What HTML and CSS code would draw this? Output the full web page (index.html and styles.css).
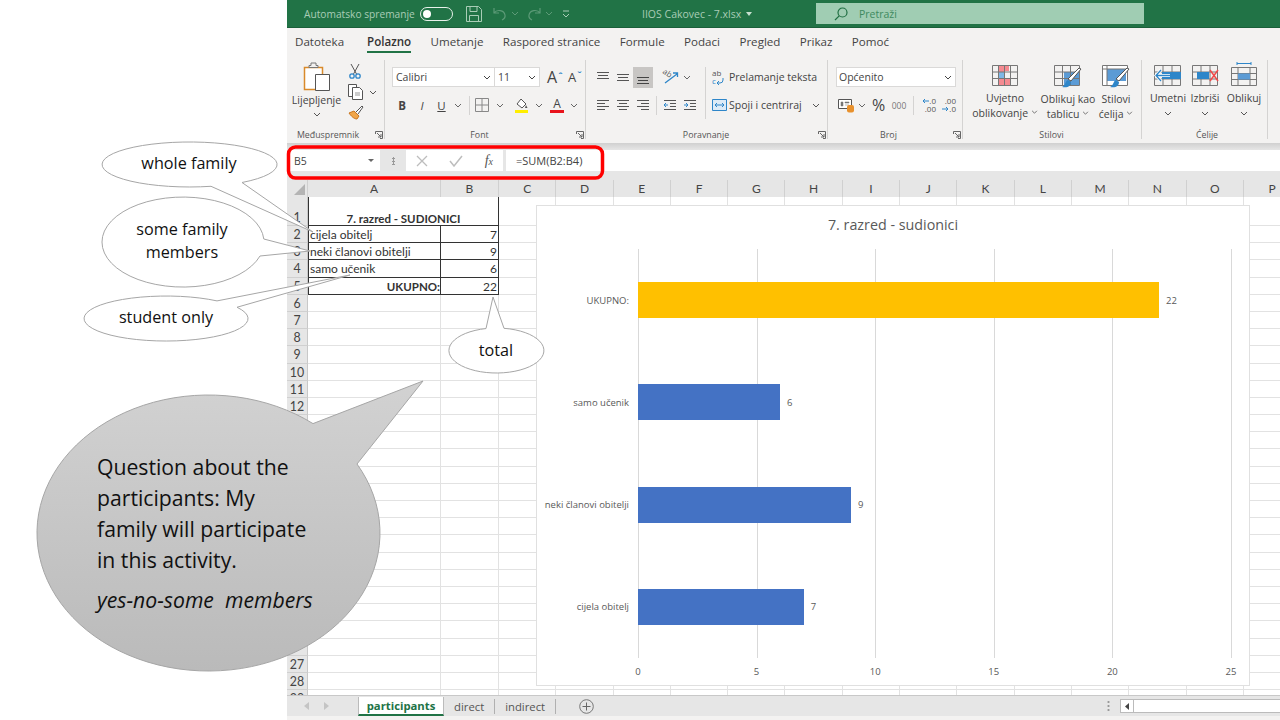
FILE: index.html
```html
<!DOCTYPE html>
<html lang="hr">
<head>
<meta charset="utf-8">
<title>IIOS Cakovec - 7.xlsx</title>
<link rel="stylesheet" href="styles.css">
</head>
<body>
<div class="slide">
  <main class="excel">
    <header class="titlebar">
      <span class="autosave">Automatsko spremanje</span>
      <span class="toggle"><i></i></span>
      <svg class="save" width="16" height="16" viewBox="0 0 16 16"><path d="M.5.5h12l3 3v12H.5zM4 .5v5h7v-5M3.500 15.500v-6h9v6" fill="none" stroke="#a9cdb6"/></svg>
      <svg class="undo" width="14" height="14" viewBox="0 0 14 14"><path d="M1 1v5h5M1 6c3-4 10-3 11 2 .4 2-1 4-3 5" fill="none" stroke="#5c9a77" stroke-width="1.200"/></svg>
      <svg class="tchev" width="8" height="5" viewBox="0 0 8 5"><path d="M1 1l3 3 3-3" fill="none" stroke="#5c9a77"/></svg>
      <svg class="redo" width="14" height="14" viewBox="0 0 14 14"><path d="M13 1v5H8M13 6C10 2 3 3 2 8c-.4 2 1 4 3 5" fill="none" stroke="#5c9a77" stroke-width="1.200"/></svg>
      <svg class="tchev" width="8" height="5" viewBox="0 0 8 5"><path d="M1 1l3 3 3-3" fill="none" stroke="#5c9a77"/></svg>
      <svg class="custom" width="8" height="8" viewBox="0 0 8 8"><path d="M1 1h6M1 4l3 3 3-3" fill="none" stroke="#a9cdb6"/></svg>
      <span class="doc">IIOS Cakovec - 7.xlsx</span>
      <span class="caret"></span>
      <div class="search">
        <svg width="14" height="14" viewBox="0 0 14 14"><circle cx="8.500" cy="5.500" r="4.500" fill="none" stroke="#1f6e42" stroke-width="1.200"/><path d="M5.200 8.800L1 13" stroke="#1f6e42" stroke-width="1.200"/></svg>
        <span>Pretraži</span>
      </div>
    </header>

    <nav class="tabs">
      <span class="file">Datoteka</span><span class="active">Polazno</span><span>Umetanje</span><span>Raspored stranice</span><span>Formule</span><span>Podaci</span><span>Pregled</span><span>Prikaz</span><span>Pomoć</span>
    </nav>

    <section class="ribbon">
      <div class="group g-clip">
        <div class="gbody clip">
          <div class="paste">
            <svg width="28" height="30" viewBox="0 0 28 30"><path d="M1.500 5.500h18v22h-18z" fill="#fff" stroke="#d98a2b" stroke-width="1.500"/><path d="M6 5.500h9v-2h-2V1H8v2.500H6z" fill="#f3f2f1" stroke="#777"/><path d="M12.500 12.500h14v16h-14z" fill="#fff" stroke="#555"/></svg>
            <span>Lijepljenje</span>
            <svg class="chev" width="8" height="5" viewBox="0 0 8 5"><path d="M1 1l3 3 3-3" fill="none" stroke="#555"/></svg>
          </div>
          <div class="clip-tools">
            <svg width="14" height="16" viewBox="0 0 14 16"><path d="M3 1l5.500 10M11 1L5.500 11" stroke="#555" fill="none"/><circle cx="4" cy="13" r="2.200" fill="none" stroke="#2e86c9" stroke-width="1.300"/><circle cx="10" cy="13" r="2.200" fill="none" stroke="#2e86c9" stroke-width="1.300"/></svg>
            <span class="clip-copy"><svg width="16" height="16" viewBox="0 0 16 16"><path d="M.5.500h8v12h-8z" fill="#fff" stroke="#555"/><path d="M4.500 3.500h7l3 3v9h-10z" fill="#fff" stroke="#555"/><path d="M7 9h5M7 11h5" stroke="#999"/></svg><svg class="chev" width="8" height="5" viewBox="0 0 8 5"><path d="M1 1l3 3 3-3" fill="none" stroke="#555"/></svg></span>
            <svg width="16" height="15" viewBox="0 0 16 15"><path d="M1 8l5-2 5 5-2 3c-3 0-6-3-8-6z" fill="#f0a64a" stroke="#c9761f"/><path d="M8 7l6-6 1 1-5 7" fill="#fff" stroke="#555"/></svg>
          </div>
        </div>
        <footer class="gfoot"><i></i><span>Međuspremnik</span><svg class="launch" width="8" height="8" viewBox="0 0 8 8"><path d="M.5 3V.5H7.500V7.500H5M2 2l4 4M3 6h3V3" fill="none" stroke="#666"/></svg></footer>
      </div>

      <div class="group g-font">
        <div class="gbody stack">
          <div class="rrow">
            <span class="select w102">Calibri<svg class="chev" width="8" height="5" viewBox="0 0 8 5"><path d="M1 1l3 3 3-3" fill="none" stroke="#444"/></svg></span>
            <span class="select w44">11<svg class="chev" width="8" height="5" viewBox="0 0 8 5"><path d="M1 1l3 3 3-3" fill="none" stroke="#444"/></svg></span>
            <span class="bigA">A<sup>ˆ</sup></span><span class="smallA">A<sup>ˇ</sup></span>
          </div>
          <div class="rrow row2">
            <b class="ib w20 t-b">B</b><i class="ib w20 t-i">I</i><u class="ib w19 t-u">U</u>
            <span class="ib w14"><svg width="8" height="5" viewBox="0 0 8 5"><path d="M1 1l3 3 3-3" fill="none" stroke="#666"/></svg></span>
            <span class="vsep"></span>
            <span class="ib w16"><svg width="14" height="14" viewBox="0 0 14 14"><path d="M.5.500h13v13H.5zM7 .5v13M.5 7h13" fill="none" stroke="#888"/></svg></span>
            <span class="ib w19"><svg width="8" height="5" viewBox="0 0 8 5"><path d="M1 1l3 3 3-3" fill="none" stroke="#666"/></svg></span>
            <span class="ib w24"><svg width="15" height="15" viewBox="0 0 15 15"><path d="M7 1l5 5-4 4-5-4z" fill="#fff" stroke="#555"/><path d="M12 7l1.500 3H11z" fill="#555"/><path d="M1 12h13v3H1z" fill="#ffee00"/></svg></span>
            <span class="ib w12"><svg width="8" height="5" viewBox="0 0 8 5"><path d="M1 1l3 3 3-3" fill="none" stroke="#666"/></svg></span>
            <span class="ib w24 colorA">A</span>
            <span class="ib w10"><svg width="8" height="5" viewBox="0 0 8 5"><path d="M1 1l3 3 3-3" fill="none" stroke="#666"/></svg></span>
          </div>
        </div>
        <footer class="gfoot"><i></i><span>Font</span><svg class="launch" width="8" height="8" viewBox="0 0 8 8"><path d="M.5 3V.5H7.500V7.500H5M2 2l4 4M3 6h3V3" fill="none" stroke="#666"/></svg></footer>
      </div>

      <div class="group g-align">
        <div class="gbody align">
          <div class="stack col-a">
            <div class="rrow">
              <span class="ib w20"><svg width="14" height="14" viewBox="0 0 14 14"><path d="M1 2.500h12M2 5.500h10M1 8.500h12" stroke="#555"/></svg></span>
              <span class="ib w20"><svg width="14" height="14" viewBox="0 0 14 14"><path d="M1 4.500h12M2 7.500h10M1 10.500h12" stroke="#555"/></svg></span>
              <span class="ib w20 pressed"><svg width="14" height="14" viewBox="0 0 14 14"><path d="M1 7.500h12M2 10.500h10M1 13.500h12" stroke="#444"/></svg></span>
              <span class="ib w8"></span>
              <span class="ib w20 orient"><em>ab</em><svg width="16" height="15" viewBox="0 0 16 15"><path d="M2 13L14 4M10 3h4.500v4" fill="none" stroke="#2e86c9" stroke-width="1.300"/></svg></span>
              <span class="ib w12"><svg width="8" height="5" viewBox="0 0 8 5"><path d="M1 1l3 3 3-3" fill="none" stroke="#666"/></svg></span>
            </div>
            <div class="rrow row2">
              <span class="ib w20"><svg width="14" height="14" viewBox="0 0 14 14"><path d="M1 2.500h12M1 5.500h8M1 8.500h12M1 11.500h8" stroke="#555"/></svg></span>
              <span class="ib w20"><svg width="14" height="14" viewBox="0 0 14 14"><path d="M1 2.500h12M3 5.500h8M1 8.500h12M3 11.500h8" stroke="#555"/></svg></span>
              <span class="ib w20"><svg width="14" height="14" viewBox="0 0 14 14"><path d="M1 2.500h12M5 5.500h8M1 8.500h12M5 11.500h8" stroke="#555"/></svg></span>
              <span class="vsep tight"></span>
              <span class="ib w20"><svg width="14" height="14" viewBox="0 0 14 14"><path d="M1 2.500h12M7 5.500h6M7 8.500h6M1 11.500h12" stroke="#555"/><path d="M5 7H1M3 5L1 7l2 2" fill="none" stroke="#2e86c9"/></svg></span>
              <span class="ib w20"><svg width="14" height="14" viewBox="0 0 14 14"><path d="M1 2.500h12M7 5.500h6M7 8.500h6M1 11.500h12" stroke="#555"/><path d="M1 7h4M3 5l2 2-2 2" fill="none" stroke="#2e86c9"/></svg></span>
            </div>
          </div>
          <span class="vsep tall"></span>
          <div class="stack col-b">
            <div class="rrow textbtn">
              <span class="wrapi"><span class="tiny">ab</span><span class="tiny blue">c<svg width="8" height="7" viewBox="0 0 8 7"><path d="M7 0v2a3 3 0 0 1-3 3H1M3 3L1 5l2 2" fill="none" stroke="#2e86c9"/></svg></span></span>
              <span>Prelamanje teksta</span>
            </div>
            <div class="rrow row2 textbtn"><svg width="15" height="14" viewBox="0 0 15 14"><path d="M.5 1.500h14v11H.5z" fill="#dcebf7" stroke="#2e86c9"/><path d="M3 7h9M5 5L3 7l2 2M10 5l2 2-2 2" fill="none" stroke="#2e86c9"/></svg><span>Spoji i centriraj</span><svg class="chev-l" width="8" height="5" viewBox="0 0 8 5"><path d="M1 1l3 3 3-3" fill="none" stroke="#555"/></svg></div>
          </div>
        </div>
        <footer class="gfoot"><i></i><span>Poravnanje</span><svg class="launch" width="8" height="8" viewBox="0 0 8 8"><path d="M.5 3V.5H7.500V7.500H5M2 2l4 4M3 6h3V3" fill="none" stroke="#666"/></svg></footer>
      </div>

      <div class="group g-num">
        <div class="gbody stack">
          <div class="rrow"><span class="select w120">Općenito<svg class="chev" width="8" height="5" viewBox="0 0 8 5"><path d="M1 1l3 3 3-3" fill="none" stroke="#444"/></svg></span></div>
          <div class="rrow row2">
            <span class="ib w20"><svg width="17" height="15" viewBox="0 0 17 15"><path d="M.5 1.500h13v9H.5z" fill="#fff" stroke="#555"/><path d="M3 4h2v4H3zM7 4h4v1H7zM7 7h4" fill="#777" stroke="#777" stroke-width=".5"/><rect x="9" y="7" width="7" height="7.500" rx="2" fill="#e8912d"/></svg></span>
            <span class="ib w12"><svg width="8" height="5" viewBox="0 0 8 5"><path d="M1 1l3 3 3-3" fill="none" stroke="#666"/></svg></span>
            <span class="ib w21 pct">%</span>
            <span class="ib w20 thou">000</span>
            <span class="vsep"></span>
            <span class="ib w20 dec">
              <span class="tiny"><svg width="7" height="6" viewBox="0 0 7 6"><path d="M7 3H1M3 1L1 3l2 2" fill="none" stroke="#2e86c9"/></svg>.0</span>
              <span class="tiny">.00</span>
            </span>
            <span class="ib w20 dec">
              <span class="tiny">.00</span>
              <span class="tiny"><svg width="7" height="6" viewBox="0 0 7 6"><path d="M0 3h6M4 1l2 2-2 2" fill="none" stroke="#2e86c9"/></svg>.0</span>
            </span>
          </div>
        </div>
        <footer class="gfoot"><i></i><span>Broj</span><svg class="launch" width="8" height="8" viewBox="0 0 8 8"><path d="M.5 3V.5H7.500V7.500H5M2 2l4 4M3 6h3V3" fill="none" stroke="#666"/></svg></footer>
      </div>

      <div class="group g-styles">
        <div class="gbody bigs">
          <div class="big w74">
            <svg width="26" height="24" viewBox="0 0 26 24"><path d="M6 1h11v6H12v7h6v8H6z" fill="#f58a91"/><path d="M6 8h6v6H6z" fill="#7fb8e6"/><path d="M.5 1.500h25v20H.5zM.5 8h25M.5 14.500h25M6.500 1.500v20M12.500 1.500v20M18.500 1.500v20" fill="none" stroke="#777"/></svg>
            <span>Uvjetno</span><span>oblikovanje <svg width="7" height="4" viewBox="0 0 8 5"><path d="M1 1l3 3 3-3" fill="none" stroke="#555"/></svg></span>
          </div>
          <div class="big w52">
            <svg width="28" height="25" viewBox="0 0 28 25"><path d="M10 8h15v13H10z" fill="#5b9bd5"/><path d="M.5 1.500h25v20H.5zM.5 8h25M.5 14.500h25M8.500 1.500v20M16.500 1.500v20" fill="none" stroke="#777"/><path d="M27 5L17 17l-3-2L25 4z" fill="#fff" stroke="#555"/><path d="M14 16c-3 1-2 5-6 7 6 1 9-1 9-5z" fill="#2e86c9"/></svg>
            <span>Oblikuj kao</span><span>tablicu <svg width="7" height="4" viewBox="0 0 8 5"><path d="M1 1l3 3 3-3" fill="none" stroke="#555"/></svg></span>
          </div>
          <div class="big w44">
            <svg width="28" height="25" viewBox="0 0 28 25"><path d="M.5 1.500h25v20H.5z" fill="#fff" stroke="#777"/><path d="M5 5h19v12H5z" fill="#5b9bd5"/><path d="M.5 5h25M5 1.500v20" fill="none" stroke="#777"/><path d="M27 5L17 17l-3-2L25 4z" fill="#fff" stroke="#555"/><path d="M14 16c-3 1-2 5-6 7 6 1 9-1 9-5z" fill="#2e86c9"/></svg>
            <span>Stilovi</span><span>ćelija <svg width="7" height="4" viewBox="0 0 8 5"><path d="M1 1l3 3 3-3" fill="none" stroke="#555"/></svg></span>
          </div>
        </div>
        <footer class="gfoot"><i></i><span>Stilovi</span><i></i></footer>
      </div>

      <div class="group g-cells">
        <div class="gbody bigs">
          <div class="big w44">
            <svg width="28" height="24" viewBox="0 0 28 24"><path d="M.5 1.500h26v20H.5zM.5 8h26M.5 15h26M9 1.500v20M18 1.500v20" fill="none" stroke="#777"/><path d="M8 8h19v7H8z" fill="#2e86c9"/><path d="M16 11.500H2M7 6l-5 5.500L7 17" fill="none" stroke="#fff" stroke-width="3"/><path d="M16 11.500H2M7 6l-5 5.500L7 17" fill="none" stroke="#2e86c9" stroke-width="1.300"/></svg>
            <span>Umetni</span>
            <svg class="chev" width="8" height="5" viewBox="0 0 8 5"><path d="M1 1l3 3 3-3" fill="none" stroke="#555"/></svg>
          </div>
          <div class="big w30">
            <svg width="27" height="24" viewBox="0 0 27 24"><path d="M.5 1.500h25v20H.5zM.5 8h25M.5 15h25M9 1.500v20M18 1.500v20" fill="none" stroke="#777"/><path d="M5 8h12v7H5z" fill="#2e86c9"/><path d="M18 6l8 11M26 6l-8 11" stroke="#f04b4b" stroke-width="1.500"/></svg>
            <span>Izbriši</span>
            <svg class="chev" width="8" height="5" viewBox="0 0 8 5"><path d="M1 1l3 3 3-3" fill="none" stroke="#555"/></svg>
          </div>
          <div class="big w48">
            <svg class="fmt" width="26" height="26" viewBox="0 0 26 26"><path d="M6 1.500h14M6 0v3M20 0v3" stroke="#2e86c9"/><path d="M.5 5.500h25v18H.5zM.5 11.500h25M.5 17.500h25M7 5.500v18M19 5.500v18" fill="none" stroke="#777"/><path d="M7 11.500h12v6H7z" fill="#5b9bd5"/></svg>
            <span>Oblikuj</span>
            <svg class="chev" width="8" height="5" viewBox="0 0 8 5"><path d="M1 1l3 3 3-3" fill="none" stroke="#555"/></svg>
          </div>
        </div>
        <footer class="gfoot"><i></i><span>Ćelije</span><i></i></footer>
      </div>
    </section>
    <div class="ribbon-shadow"></div>

    <section class="formula">
      <div class="namebox"><span>B5</span><em></em></div>
      <div class="fdots"></div>
      <div class="fxbox">
        <svg width="12" height="12" viewBox="0 0 12 12"><path d="M1 1l10 10M11 1L1 11" stroke="#bdbdbd" stroke-width="1.300"/></svg>
        <svg width="14" height="12" viewBox="0 0 14 12"><path d="M1 6l4 5 8-10" fill="none" stroke="#bdbdbd" stroke-width="1.500"/></svg>
        <span class="fx">f<small>x</small></span>
      </div>
      <div class="finput">=SUM(B2:B4)</div>
    </section>

    <section class="sheet">
      <div class="colheads">
        <span class="corner"><svg width="11" height="11" viewBox="0 0 11 11"><path d="M11 0v11H0z" fill="#b4b4b4"/></svg></span>
        <span class="c-a">A</span><span class="c-b">B</span>
        <span class="c">C</span><span class="c">D</span><span class="c">E</span><span class="c">F</span><span class="c">G</span><span class="c">H</span><span class="c">I</span><span class="c">J</span><span class="c">K</span><span class="c">L</span><span class="c">M</span><span class="c">N</span><span class="c">O</span><span class="c">P</span>
      </div>
      <div class="rows">
        <div class="row first"><span class="num">1</span><span class="merged">7. razred - SUDIONICI</span><span class="fill"></span></div>
        <div class="row"><span class="num">2</span><span class="a data">cijela obitelj</span><span class="b data">7</span><span class="fill"></span></div>
        <div class="row"><span class="num">3</span><span class="a data">neki članovi obitelji</span><span class="b data">9</span><span class="fill"></span></div>
        <div class="row"><span class="num">4</span><span class="a data">samo učenik</span><span class="b data">6</span><span class="fill"></span></div>
        <div class="row"><span class="num">5</span><span class="a data total">UKUPNO:</span><span class="b data">22</span><span class="fill"></span></div>
        <div class="row"><span class="num">6</span><span class="a"></span><span class="b"></span><span class="fill"></span></div>
        <div class="row"><span class="num">7</span><span class="a"></span><span class="b"></span><span class="fill"></span></div>
        <div class="row"><span class="num">8</span><span class="a"></span><span class="b"></span><span class="fill"></span></div>
        <div class="row"><span class="num">9</span><span class="a"></span><span class="b"></span><span class="fill"></span></div>
        <div class="row"><span class="num">10</span><span class="a"></span><span class="b"></span><span class="fill"></span></div>
        <div class="row"><span class="num">11</span><span class="a"></span><span class="b"></span><span class="fill"></span></div>
        <div class="row"><span class="num">12</span><span class="a"></span><span class="b"></span><span class="fill"></span></div>
        <div class="row"><span class="num"></span><span class="a"></span><span class="b"></span><span class="fill"></span></div>
        <div class="row"><span class="num"></span><span class="a"></span><span class="b"></span><span class="fill"></span></div>
        <div class="row"><span class="num"></span><span class="a"></span><span class="b"></span><span class="fill"></span></div>
        <div class="row"><span class="num"></span><span class="a"></span><span class="b"></span><span class="fill"></span></div>
        <div class="row"><span class="num"></span><span class="a"></span><span class="b"></span><span class="fill"></span></div>
        <div class="row"><span class="num"></span><span class="a"></span><span class="b"></span><span class="fill"></span></div>
        <div class="row"><span class="num"></span><span class="a"></span><span class="b"></span><span class="fill"></span></div>
        <div class="row"><span class="num"></span><span class="a"></span><span class="b"></span><span class="fill"></span></div>
        <div class="row"><span class="num"></span><span class="a"></span><span class="b"></span><span class="fill"></span></div>
        <div class="row"><span class="num"></span><span class="a"></span><span class="b"></span><span class="fill"></span></div>
        <div class="row"><span class="num"></span><span class="a"></span><span class="b"></span><span class="fill"></span></div>
        <div class="row"><span class="num"></span><span class="a"></span><span class="b"></span><span class="fill"></span></div>
        <div class="row"><span class="num"></span><span class="a"></span><span class="b"></span><span class="fill"></span></div>
        <div class="row"><span class="num"></span><span class="a"></span><span class="b"></span><span class="fill"></span></div>
        <div class="row"><span class="num">27</span><span class="a"></span><span class="b"></span><span class="fill"></span></div>
        <div class="row"><span class="num">28</span><span class="a"></span><span class="b"></span><span class="fill"></span></div>
        <div class="row"><span class="num">29</span><span class="a"></span><span class="b"></span><span class="fill"></span></div>
      </div>

      <figure class="chart">
        <figcaption>7. razred - sudionici</figcaption>
        <div class="plot">
          <div class="bar-row"><span class="cat">UKUPNO:</span><div class="track"><i class="bar gold" style="width:88%"></i><span class="val">22</span></div></div>
          <div class="bar-row"><span class="cat">samo učenik</span><div class="track"><i class="bar" style="width:24%"></i><span class="val">6</span></div></div>
          <div class="bar-row"><span class="cat">neki članovi obitelji</span><div class="track"><i class="bar" style="width:36%"></i><span class="val">9</span></div></div>
          <div class="bar-row"><span class="cat">cijela obitelj</span><div class="track"><i class="bar" style="width:28%"></i><span class="val">7</span></div></div>
        </div>
        <div class="axis"><span>0</span><span>5</span><span>10</span><span>15</span><span>20</span><span>25</span></div>
      </figure>
    </section>

    <section class="sheetbar">
      <div class="navs">
        <svg width="5" height="8" viewBox="0 0 5 8"><path d="M5 0v8L0 4z" fill="#c4c4c4"/></svg>
        <svg width="5" height="8" viewBox="0 0 5 8"><path d="M0 0v8l5-4z" fill="#c4c4c4"/></svg>
      </div>
      <span class="stab current">participants</span>
      <span class="stab">direct</span><span class="ssep"></span>
      <span class="stab third">indirect</span><span class="ssep"></span>
      <svg class="plus" width="15" height="15" viewBox="0 0 15 15"><circle cx="7.500" cy="7.500" r="6.800" fill="none" stroke="#777"/><path d="M7.500 3.500v8M3.500 7.500h8" stroke="#666"/></svg>
      <span class="grip"></span>
      <div class="hscroll"><span class="harrow"><svg width="4" height="7" viewBox="0 0 4 7"><path d="M4 0v7L0 3.500z" fill="#444"/></svg></span></div>
    </section>
    <div class="statusbar"></div>
  </main>

  <svg class="overlay" width="1280" height="720" viewBox="0 0 1280 720">
    <defs>
      <linearGradient id="grey" x1="0" y1="0" x2="0" y2="1">
        <stop offset="0" stop-color="#d2d2d2"/>
        <stop offset="1" stop-color="#bababa"/>
      </linearGradient>
    </defs>
    <rect class="redbox" x="288.500" y="147" width="314" height="31" rx="7"/>
    <path class="bubble" d="M242 182.500A87.500 22.500 0 1 0 211 186.300L313 232Z"/>
    <text class="lbl" x="189" y="169">whole family</text>
    <path class="bubble" d="M260 256A81 45 0 1 1 263.800 239L310 251Z"/>
    <text class="lbl" x="182" y="235">some family</text>
    <text class="lbl" x="182" y="258">members</text>
    <path class="bubble" d="M237 307.250A82 22.500 0 1 1 217 300.900L350 275Z"/>
    <text class="lbl" x="166" y="323">student only</text>
    <path class="bubble" d="M504 328.300A47.500 22.500 0 1 1 486 328.560L493 297Z"/>
    <text class="lbl" x="496" y="356">total</text>
    <path class="bubble-big" d="M357 464A171.500 138 0 1 1 313 423.600L423 381Z"/>
    <text class="big-t" x="97" y="475">Question about the</text>
    <text class="big-t" x="97" y="506">participants: My</text>
    <text class="big-t" x="97" y="537">family will participate</text>
    <text class="big-t" x="97" y="568">in this activity.</text>
    <text class="big-t em" x="97" y="608">yes-no-some  members</text>
  </svg>
</div>
</body>
</html>
```

FILE: styles.css
```css
* { box-sizing: border-box; }
html, body { margin: 0; padding: 0; height: 100%; background: #fff; overflow: hidden; }
body { font-family: "Open Sans", "Noto Sans", "Liberation Sans", sans-serif; color: #444; }
.slide { position: relative; width: 1280px; height: 720px; overflow: hidden; background: #fff; }
.excel { margin-left: 287px; width: 993px; height: 720px; display: flex; flex-direction: column; background: #e6e6e6; }

/* title bar */
.titlebar { height: 28px; flex: none; display: flex; align-items: center; padding-left: 17px; background: #217346; border-bottom: 1px solid #1a5f39; }
.autosave { width: 116px; font-size: 10.200px; color: #a9cdb6; white-space: nowrap; }
.toggle { width: 33px; height: 14px; border: 1px solid #e8f1eb; border-radius: 7px; display: flex; align-items: center; padding-left: 2px; }
.toggle i { width: 8px; height: 8px; border-radius: 50%; background: #fff; }
.save { margin-left: 13px; }
.undo { margin-left: 11px; }
.tchev { margin-left: 4px; }
.redo { margin-left: 8px; }
.custom { margin-left: 9px; }
.doc { margin-left: 72px; width: 101px; font-size: 10.500px; color: #a9cdb6; white-space: nowrap; }
.caret { width: 0; height: 0; margin-left: 3px; border: 3px solid transparent; border-top: 4px solid #c8e0d0; border-bottom: 0; }
.search { margin-left: 64px; width: 328px; height: 21px; display: flex; align-items: center; gap: 11px; padding-left: 18px; background: #a0cdb3; font-size: 10.500px; color: #3e8a5f; }

/* tabs */
.tabs { height: 30px; flex: none; display: flex; gap: 19.400px; padding: 5px 0 0 8px; background: #f3f2f1; font-size: 11.600px; color: #444; }
.tabs span { height: 20px; line-height: 18px; white-space: nowrap; }
.tabs .file { margin-right: 3.500px; }
.tabs .active { font-weight: 600; border-bottom: 2px solid #217346; color: #333; }

/* ribbon */
.ribbon { height: 85px; flex: none; display: flex; background: #f3f2f1; font-size: 10.500px; }
.group { flex: none; display: flex; flex-direction: column; height: 79px; margin-top: 2px; border-right: 1px solid #d4d3d2; }
.g-clip { width: 98px; }
.g-font { width: 201px; }
.g-align { width: 242px; }
.g-num { width: 135px; }
.g-styles { width: 179px; }
.g-cells { width: 126px; }
.gbody { flex: 1; min-height: 0; }
.gfoot { height: 14px; display: grid; grid-template-columns: 1fr auto 1fr; align-items: center; font-size: 8.800px; color: #555; padding-right: 1px; margin-bottom: -3px; }
.gfoot span { white-space: nowrap; line-height: 14px; }
.g-clip .gfoot span { margin-right: 14px; }
.g-font .gfoot span { margin-right: 10px; }
.g-num .gfoot span { margin-right: 12px; }
.g-cells .gfoot span { margin-left: 6px; }
.launch { justify-self: end; }

.stack { display: flex; flex-direction: column; padding: 7px 0 0 8px; }
.g-font .stack { padding-left: 7px; }
.rrow { display: flex; align-items: center; height: 20px; }
.row2 { margin-top: 8px; }
.select { height: 20px; background: #fff; border: 1px solid #dad9d8; display: flex; align-items: center; justify-content: space-between; padding: 0 3px; font-size: 10.500px; color: #444; }
.w102 { width: 103px; }
.w44 { width: 46px; margin-left: -1px; }
.w120 { width: 120px; padding-left: 2px; }
.bigA { margin-left: 7px; font-size: 16px; width: 21px; line-height: 20px; }
.smallA { font-size: 13px; width: 14px; line-height: 20px; }
.bigA sup, .smallA sup { font-size: 9px; color: #2e86c9; vertical-align: 4px; line-height: 0; font-weight: 700; margin-left: 1px; }
.ib { flex: none; height: 20px; display: flex; align-items: center; justify-content: center; font-style: normal; }
.w8 { width: 8px; }
.w10 { width: 10px; }
.w12 { width: 12px; }
.w14 { width: 14px; }
.w16 { width: 16px; }
.w19 { width: 19px; }
.w20 { width: 20px; }
.w21 { width: 21px; }
.w24 { width: 24px; }
.t-b { font-size: 11.500px; font-weight: 700; }
.t-i { font-size: 11.500px; font-style: italic; }
.t-u { font-size: 11.500px; }
.colorA { font-size: 12px; border-bottom: 3px solid #e8141c; width: 14px; margin: 0 5px; height: 16px; line-height: 12px; }
.vsep { flex: none; width: 1px; height: 19px; margin: 0 4px; background: #d4d3d2; }
.vsep.tight { margin: 0 3px 0 3px; }
.vsep.tall { height: 52px; margin: 7px 2px 0 1px; }
.pressed { background: #c8c6c4; height: 21px; }
.align { display: flex; }
.col-a { width: 118px; padding-left: 7px; }
.col-b { padding-left: 4px; }
.textbtn { gap: 2px; white-space: nowrap; font-size: 10.500px; }
.chev-l { margin-left: 8px; }
.pct { font-size: 16px; }
.thou { font-size: 8.500px; color: #777; }
.tiny { display: flex; align-items: center; font-size: 8px; line-height: 8px; height: 8px; white-space: nowrap; color: #555; }
.blue { color: #2e86c9; }
.dec { flex-direction: column; align-items: flex-end; padding-right: 2px; }
.wrapi { width: 15px; display: flex; flex-direction: column; }
.orient { position: relative; }
.orient em { position: absolute; left: 2px; top: 2px; font-style: normal; font-size: 8px; line-height: 8px; color: #555; transform: rotate(35deg); }

.clip { display: flex; padding: 2px 0 0 3px; }
.paste { width: 53px; display: flex; flex-direction: column; align-items: center; line-height: 14px; white-space: nowrap; }
.paste span { margin-top: 1px; }
.paste .chev { margin-top: 5px; }
.clip-tools { width: 34px; display: flex; flex-direction: column; align-items: flex-start; gap: 5px; padding: 1px 0 0 5px; }
.clip-copy { display: flex; align-items: center; gap: 5px; }
.bigs { display: flex; padding: 4px 0 0 5px; }
.g-cells .bigs { padding-left: 4px; }
.big { flex: none; display: flex; flex-direction: column; align-items: center; line-height: 14.500px; white-space: nowrap; }
.big svg:first-child { margin-bottom: 3px; flex: none; }
.big .fmt { margin-top: -2px; }
.big .chev { margin-top: 5px; }
.w74 { width: 74px; }
.w52 { width: 52px; }
.big.w44 { width: 44px; margin-left: 0; }
.w30 { width: 30px; }
.w48 { width: 48px; }
.ribbon-shadow { height: 7px; flex: none; background: linear-gradient(#d0d0d0, #e6e6e6); }

/* formula bar */
.formula { height: 22px; flex: none; display: flex; align-items: stretch; padding-left: 3px; font-size: 10.500px; color: #444; }
.namebox { width: 90px; background: #fff; display: flex; align-items: center; justify-content: space-between; padding: 0 6px 0 4px; margin-bottom: 1px; }
.namebox em { border: 3px solid transparent; border-top: 3px solid #666; border-bottom: 0; }
.fdots { width: 26px; margin: 7px 0; background: radial-gradient(circle, #999 1px, transparent 1.200px) center top / 3px 3px repeat-y; }
.fxbox { width: 97px; background: #fff; margin-bottom: 1px; display: flex; align-items: center; justify-content: space-between; padding: 0 10px; }
.fx { font-family: "Liberation Serif", serif; font-style: italic; font-size: 14px; color: #555; }
.fx small { font-size: 10px; }
.finput { flex: 1; margin-left: 3px; margin-bottom: 1px; background: #fff; padding-left: 10px; line-height: 21px; font-size: 11px; }

/* sheet */
.sheet { position: relative; flex: none; height: 523px; overflow: hidden; background: #fff; }
.colheads { height: 25px; display: flex; align-items: flex-end; background: #e6e6e6; font-family: Lato, "Open Sans", sans-serif; font-size: 12px; color: #444; }
.colheads span { height: 17px; line-height: 17px; text-align: center; flex: none; border-right: 1px solid #d0d0d0; }
.corner { width: 21px; display: flex; align-items: flex-end; justify-content: flex-end; padding: 0 2px 2px 0; }
.c-a { width: 133px; }
.c-b { width: 58px; }
.c { width: 57.300px; }
.rows { display: flex; flex-direction: column; }
.row { height: 17.200px; flex: none; display: flex; font-family: Lato, "Open Sans", sans-serif; font-size: 12px; color: #333; }
.row.first { height: 29px; }
.num { width: 21px; flex: none; background: #e6e6e6; text-align: center; border-bottom: 1px solid #d0d0d0; border-right: 1px solid #c8c8c8; line-height: 18px; color: #444; font-size: 12.400px; }
.first .num { line-height: 42px; overflow: hidden; }
.a { width: 133px; flex: none; border-right: 1px solid #e2e2e2; border-bottom: 1px solid #e2e2e2; padding-left: 1px; line-height: 18px; }
.b { width: 58px; flex: none; border-right: 1px solid #e2e2e2; border-bottom: 1px solid #e2e2e2; padding-right: 1px; text-align: right; line-height: 18px; }
.data { border-color: #333; }
.a.data { border-left: 1px solid #333; }
.a.total { text-align: right; font-weight: 700; font-size: 11.500px; }
.merged { width: 191px; flex: none; border: 1px solid #333; border-top: 0; text-align: center; font-weight: 700; line-height: 44px; height: 29px; overflow: hidden; font-size: 11.500px; }
.fill { flex: 1; border-bottom: 1px solid #e2e2e2; background: repeating-linear-gradient(90deg, transparent 0 56.300px, #e2e2e2 56.300px 57.300px); }

/* chart */
.chart { position: absolute; left: 249px; top: 33px; width: 714px; height: 481px; margin: 0; background: #fff; border: 1px solid #e0e0e0; display: flex; flex-direction: column; font-family: "Open Sans", sans-serif; color: #595959; }
.chart figcaption { height: 43px; padding-top: 9px; text-align: center; font-size: 14.300px; line-height: 20px; flex: none; }
.plot { height: 409px; flex: none; display: flex; flex-direction: column; }
.bar-row { flex: 1; display: flex; align-items: stretch; }
.cat { width: 101px; flex: none; align-self: center; padding-right: 9px; text-align: right; font-size: 9.500px; white-space: nowrap; }
.track { width: 594px; flex: none; display: flex; align-items: center; padding-right: 2px; background: repeating-linear-gradient(90deg, #d9d9d9 0 1px, transparent 1px 118.600px); }
.bar { display: block; height: 36px; background: #4472c4; flex: none; }
.bar.gold { background: #ffc000; }
.val { margin-left: 7px; font-size: 9.500px; }
.axis { display: flex; padding: 7px 0 0 41.700px; font-size: 9.500px; }
.axis span { width: 118.600px; flex: none; text-align: center; }

/* sheet tabs */
.sheetbar { height: 21px; flex: none; display: flex; align-items: center; background: #e6e6e6; border-top: 1px solid #c8c8c8; font-size: 11.300px; color: #555; }
.navs { width: 71px; display: flex; gap: 15px; padding-left: 17px; }
.stab { line-height: 17px; white-space: nowrap; }
.current { width: 86px; height: 19px; text-align: center; background: #fff; color: #217346; font-weight: 700; border-bottom: 2px solid #217346; border-left: 1px solid #bbb; border-right: 1px solid #bbb; margin-right: 10px; }
.ssep { width: 1px; height: 15px; background: #b0b0b0; margin: 0 10px; }
.plus { margin-left: 13px; }
.grip { width: 3px; height: 12px; margin-left: 513px; background: radial-gradient(circle, #999 1px, transparent 1.200px) 0 0 / 3px 4px repeat-y; }
.hscroll { flex: 1; height: 14px; margin-left: 10px; background: #fff; border: 1px solid #bbb; border-right: 0; }
.harrow { width: 13px; height: 12px; display: flex; align-items: center; justify-content: center; border-right: 1px solid #bbb; }
.statusbar { flex: 1; background: #f3f2f1; }

/* overlay */
.overlay { position: absolute; left: 0; top: 0; pointer-events: none; }
.redbox { fill: none; stroke: #ff0000; stroke-width: 3.500; }
.bubble { fill: #fff; stroke: #a6a6a6; stroke-width: 1; }
.bubble-big { fill: url(#grey); stroke: #a6a6a6; stroke-width: 1; }
.lbl { font-size: 16.200px; fill: #111; text-anchor: middle; font-family: "Open Sans", sans-serif; }
.big-t { font-size: 21.200px; fill: #111; font-family: "Open Sans", sans-serif; white-space: pre; }
.em { font-style: italic; }
```
